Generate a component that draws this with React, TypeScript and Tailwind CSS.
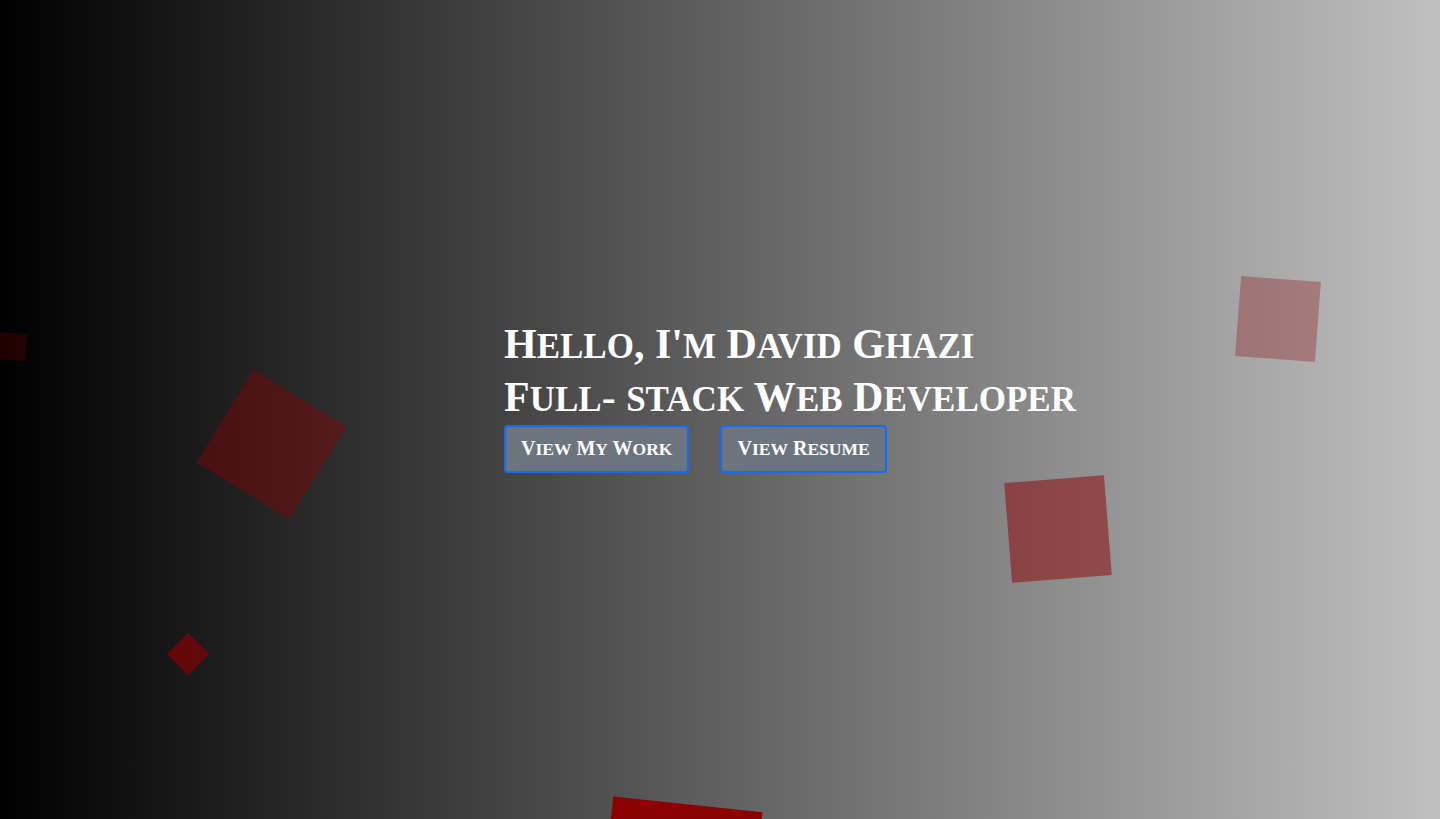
const squares = [
  { cls: 'left-[-4px] top-[333px] w-[30px] h-[27px] rotate-[4deg] opacity-25' },
  { cls: 'left-[217px] top-[390px] w-[109px] h-[109px] rotate-[31.5deg] opacity-40' },
  { cls: 'left-[173px] top-[639px] w-[30px] h-[30px] rotate-45 opacity-65' },
  { cls: 'left-[605px] top-[804px] w-[150px] h-[150px] rotate-[6deg] opacity-100' },
  { cls: 'left-[1008px] top-[479px] w-[100px] h-[100px] rotate-[-4.5deg] opacity-50' },
  { cls: 'left-[1238px] top-[279px] w-[80px] h-[80px] rotate-[4.3deg] opacity-30' },
];

// renders lowercase runs as smaller capitals, like the display face does
function SmallCaps({ text, small }: { text: string; small: string }) {
  const runs = text.match(/[a-z]+|[^a-z]+/g) ?? [];
  return (
    <>
      {runs.map((r, i) =>
        /[a-z]/.test(r) ? (
          <span key={i} className={`uppercase ${small}`}>
            {r}
          </span>
        ) : (
          <span key={i}>{r}</span>
        )
      )}
    </>
  );
}

export default function App() {
  return (
    <div
      className="relative h-[819px] w-full overflow-hidden bg-[linear-gradient(to_right,#000000,#c0c0c0)]"
      style={{ fontFamily: '"Liberation Serif", "DejaVu Serif", serif' }}
    >
      {/* floating squares */}
      {squares.map((s, i) => (
        <div key={i} className={`absolute bg-[#8b0000] ${s.cls}`} />
      ))}

      <div className="relative flex flex-col pl-[504px] pt-[319px]">
        <h1 className="text-[42px] font-bold leading-[50px] text-white">
          <SmallCaps text="Hello, I'm David Ghazi" small="text-[35px]" />
          <br />
          <SmallCaps text="Full- stack Web Developer" small="text-[35px]" />
        </h1>
        <div className="mt-[0px] flex gap-[31px]">
          <button className="h-[48px] rounded-[4px] border-2 border-[#0d6efd] bg-[#6c757d] px-[15px] pb-[2px] text-[20px] font-bold text-white">
            <SmallCaps text="View My Work" small="text-[17.5px]" />
          </button>
          <button className="h-[48px] rounded-[4px] border-2 border-[#0d6efd] bg-[#6c757d] px-[15px] pb-[2px] text-[20px] font-bold text-white">
            <SmallCaps text="View Resume" small="text-[17.5px]" />
          </button>
        </div>
      </div>
    </div>
  );
}
